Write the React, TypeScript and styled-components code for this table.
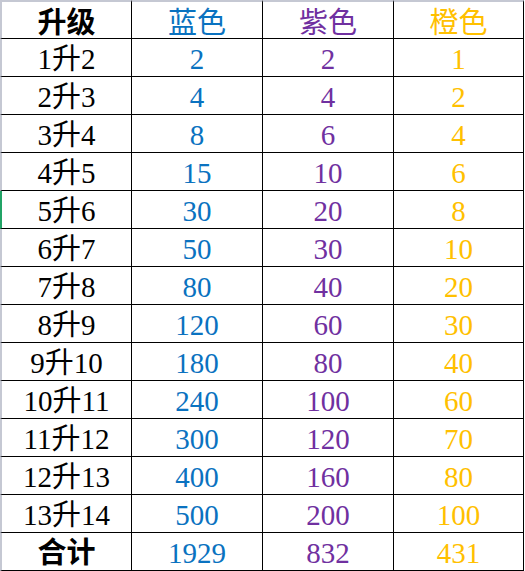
import React from "react";
import styled, { createGlobalStyle } from "styled-components";

const Global = createGlobalStyle`
  html, body { margin: 0; padding: 0; background: #ffffff; }
`;

const Sheet = styled.div`
  display: grid;
  grid-template-columns: 132px 131px 131px 130px;
  grid-template-rows: 39px repeat(14, 38px);
  width: 525px;
  font-family: "Liberation Serif", "Noto Sans CJK SC", serif;
  font-size: 29px;
`;

const Cell = styled.div<{
  $color: string;
  $first?: boolean;
  $top?: boolean;
  $mark?: boolean;
  $bold?: boolean;
}>`
  display: flex;
  align-items: center;
  justify-content: center;
  box-sizing: border-box;
  border-right: 1px solid #000;
  border-bottom: 1px solid #000;
  border-left: ${(p) =>
    p.$first ? `2px solid ${p.$mark ? "#21a366" : "#c5c8d3"}` : "none"};
  border-top: ${(p) => (p.$top ? "2px solid #c5c8d3" : "none")};
  color: ${(p) => p.$color};
  font-weight: ${(p) => (p.$bold ? 700 : 400)};
  padding-top: ${(p) => (p.$top ? "7px" : "4px")};
  line-height: 1;
  white-space: nowrap;
`;

const BLUE = "#0a72c0";
const PURPLE = "#7030a0";
const ORANGE = "#ffc000";

const rows: [string, string, string, string][] = [
  ["1升2", "2", "2", "1"],
  ["2升3", "4", "4", "2"],
  ["3升4", "8", "6", "4"],
  ["4升5", "15", "10", "6"],
  ["5升6", "30", "20", "8"],
  ["6升7", "50", "30", "10"],
  ["7升8", "80", "40", "20"],
  ["8升9", "120", "60", "30"],
  ["9升10", "180", "80", "40"],
  ["10升11", "240", "100", "60"],
  ["11升12", "300", "120", "70"],
  ["12升13", "400", "160", "80"],
  ["13升14", "500", "200", "100"],
];

export default function App() {
  return (
    <>
      <Global />
      <Sheet>
        <Cell $color="#000" $first $top $bold>升级</Cell>
        <Cell $color={BLUE} $top>蓝色</Cell>
        <Cell $color={PURPLE} $top>紫色</Cell>
        <Cell $color={ORANGE} $top>橙色</Cell>
        {rows.map((r, i) => (
          <React.Fragment key={r[0]}>
            <Cell $color="#000" $first $mark={i === 4}>{r[0]}</Cell>
            <Cell $color={BLUE}>{r[1]}</Cell>
            <Cell $color={PURPLE}>{r[2]}</Cell>
            <Cell $color={ORANGE}>{r[3]}</Cell>
          </React.Fragment>
        ))}
        <Cell $color="#000" $first $bold>合计</Cell>
        <Cell $color={BLUE}>1929</Cell>
        <Cell $color={PURPLE}>832</Cell>
        <Cell $color={ORANGE}>431</Cell>
      </Sheet>
    </>
  );
}
